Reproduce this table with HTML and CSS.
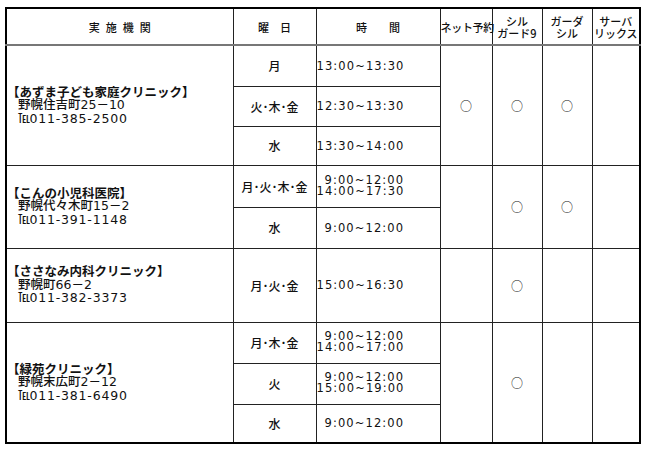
FILE: index.html
```html
<!DOCTYPE html>
<html lang="ja">
<head>
<meta charset="utf-8">
<title>実施機関一覧</title>
<link rel="stylesheet" href="styles.css">
</head>
<body>
<table class="sched">
  <colgroup>
    <col class="c-inst">
    <col class="c-day">
    <col class="c-time">
    <col class="c-net">
    <col class="c-v1">
    <col class="c-v2">
    <col class="c-v3">
  </colgroup>
  <thead>
    <tr class="h-head">
      <th class="th-inst">実施機関</th>
      <th class="th-day">曜　日</th>
      <th class="th-time">時　　間</th>
      <th class="th-small">ネット予約</th>
      <th class="th-two">シル<br>ガード9</th>
      <th class="th-two">ガーダ<br>シル</th>
      <th class="th-two">サーバ<br>リックス</th>
    </tr>
  </thead>
  <tbody>
    <tr class="h41 grp">
      <td class="inst" rowspan="3"><span class="name">【あずま子ども家庭クリニック】</span><br><span class="addr">野幌住吉町25－10</span><br><span class="tel"><span class="telmark">℡</span>011-385-2500</span></td>
      <td class="day">月</td>
      <td class="time">13:00~13:30</td>
      <td class="mark" rowspan="3">○</td>
      <td class="mark" rowspan="3">○</td>
      <td class="mark" rowspan="3">○</td>
      <td class="mark" rowspan="3"></td>
    </tr>
    <tr class="h40">
      <td class="day">火･木･金</td>
      <td class="time">12:30~13:30</td>
    </tr>
    <tr class="h39">
      <td class="day">水</td>
      <td class="time">13:30~14:00</td>
    </tr>

    <tr class="h42 grp">
      <td class="inst" rowspan="2"><span class="name">【こんの小児科医院】</span><br><span class="addr">野幌代々木町15－2</span><br><span class="tel"><span class="telmark">℡</span>011-391-1148</span></td>
      <td class="day">月･火･木･金</td>
      <td class="time"><span class="two"><span class="ind">9:00~12:00</span><br>14:00~17:30</span></td>
      <td class="mark" rowspan="2"></td>
      <td class="mark" rowspan="2">○</td>
      <td class="mark" rowspan="2">○</td>
      <td class="mark" rowspan="2"></td>
    </tr>
    <tr class="h41">
      <td class="day">水</td>
      <td class="time"><span class="ind">9:00~12:00</span></td>
    </tr>

    <tr class="h74 grp">
      <td class="inst"><span class="name">【ささなみ内科クリニック】</span><br><span class="addr">野幌町66－2</span><br><span class="tel"><span class="telmark">℡</span>011-382-3373</span></td>
      <td class="day">月･火･金</td>
      <td class="time">15:00~16:30</td>
      <td class="mark"></td>
      <td class="mark">○</td>
      <td class="mark"></td>
      <td class="mark"></td>
    </tr>

    <tr class="h41 grp">
      <td class="inst" rowspan="3"><span class="name">【緑苑クリニック】</span><br><span class="addr">野幌末広町2－12</span><br><span class="tel"><span class="telmark">℡</span>011-381-6490</span></td>
      <td class="day">月･木･金</td>
      <td class="time"><span class="two"><span class="ind">9:00~12:00</span><br>14:00~17:00</span></td>
      <td class="mark" rowspan="3"></td>
      <td class="mark" rowspan="3">○</td>
      <td class="mark" rowspan="3"></td>
      <td class="mark" rowspan="3"></td>
    </tr>
    <tr class="h41">
      <td class="day">火</td>
      <td class="time"><span class="two"><span class="ind">9:00~12:00</span><br>15:00~19:00</span></td>
    </tr>
    <tr class="h39">
      <td class="day">水</td>
      <td class="time"><span class="ind">9:00~12:00</span></td>
    </tr>
  </tbody>
</table>
</body>
</html>
```
FILE: styles.css
```css
html, body {
  margin: 0;
  padding: 0;
  background: #fff;
}
body {
  font-family: "DejaVu Sans", "Noto Sans CJK JP", sans-serif;
  color: #111;
  font-size: 12px;
}
.sched {
  margin: 7px 0 0 5px;
  border-collapse: collapse;
  table-layout: fixed;
  width: 634px;
  border: 2px solid #000;
}
.c-inst { width: 227px; }
.c-day { width: 83px; }
.c-time { width: 124px; }
.c-net { width: 52px; }
.c-v1 { width: 50px; }
.c-v2 { width: 50px; }
.c-v3 { width: 48px; }

.sched th, .sched td {
  border: 1px solid #222;
  padding: 0;
  vertical-align: middle;
}
.sched th {
  font-family: "Noto Sans CJK JP", sans-serif;
  font-weight: 500;
  font-size: 11px;
  text-align: center;
  line-height: 12px;
  border-bottom: 2px solid #777;
}
.h-head { height: 37px; }
.h39 { height: 39px; }
.h40 { height: 40px; }
.h41 { height: 41px; }
.h42 { height: 42px; }
.h74 { height: 74px; }

.th-inst { letter-spacing: 6px; text-indent: 6px; }
.th-day, .th-time { font-size: 11.5px; }
.th-small { font-size: 10px; letter-spacing: -0.3px; white-space: nowrap; }
.th-two { font-size: 11px; line-height: 12px; white-space: nowrap; }

.inst {
  padding-left: 1px;
  line-height: 12.5px;
  white-space: nowrap;
}
.name {
  font-family: "Noto Sans CJK JP", sans-serif;
  font-weight: 700;
  font-size: 12.5px;
}
.addr, .tel {
  padding-left: 11px;
  font-size: 12.5px;
  font-weight: 500;
}
.tel { letter-spacing: 0.8px; }
.telmark {
  font-family: "Noto Sans CJK JP", sans-serif;
  font-size: 12px;
  letter-spacing: -0.5px;
}

.day {
  text-align: center;
  font-family: "Noto Sans CJK JP", sans-serif;
  font-weight: 500;
  font-size: 12px;
}
.time {
  padding-left: 2px;
  font-size: 11.5px;
  letter-spacing: 1.1px;
  white-space: nowrap;
}
.two { display: inline-block; line-height: 11px; }
.ind { padding-left: 8px; }
.mark {
  text-align: center;
  font-family: "Noto Sans CJK JP", sans-serif;
  font-size: 12px;
}
```
